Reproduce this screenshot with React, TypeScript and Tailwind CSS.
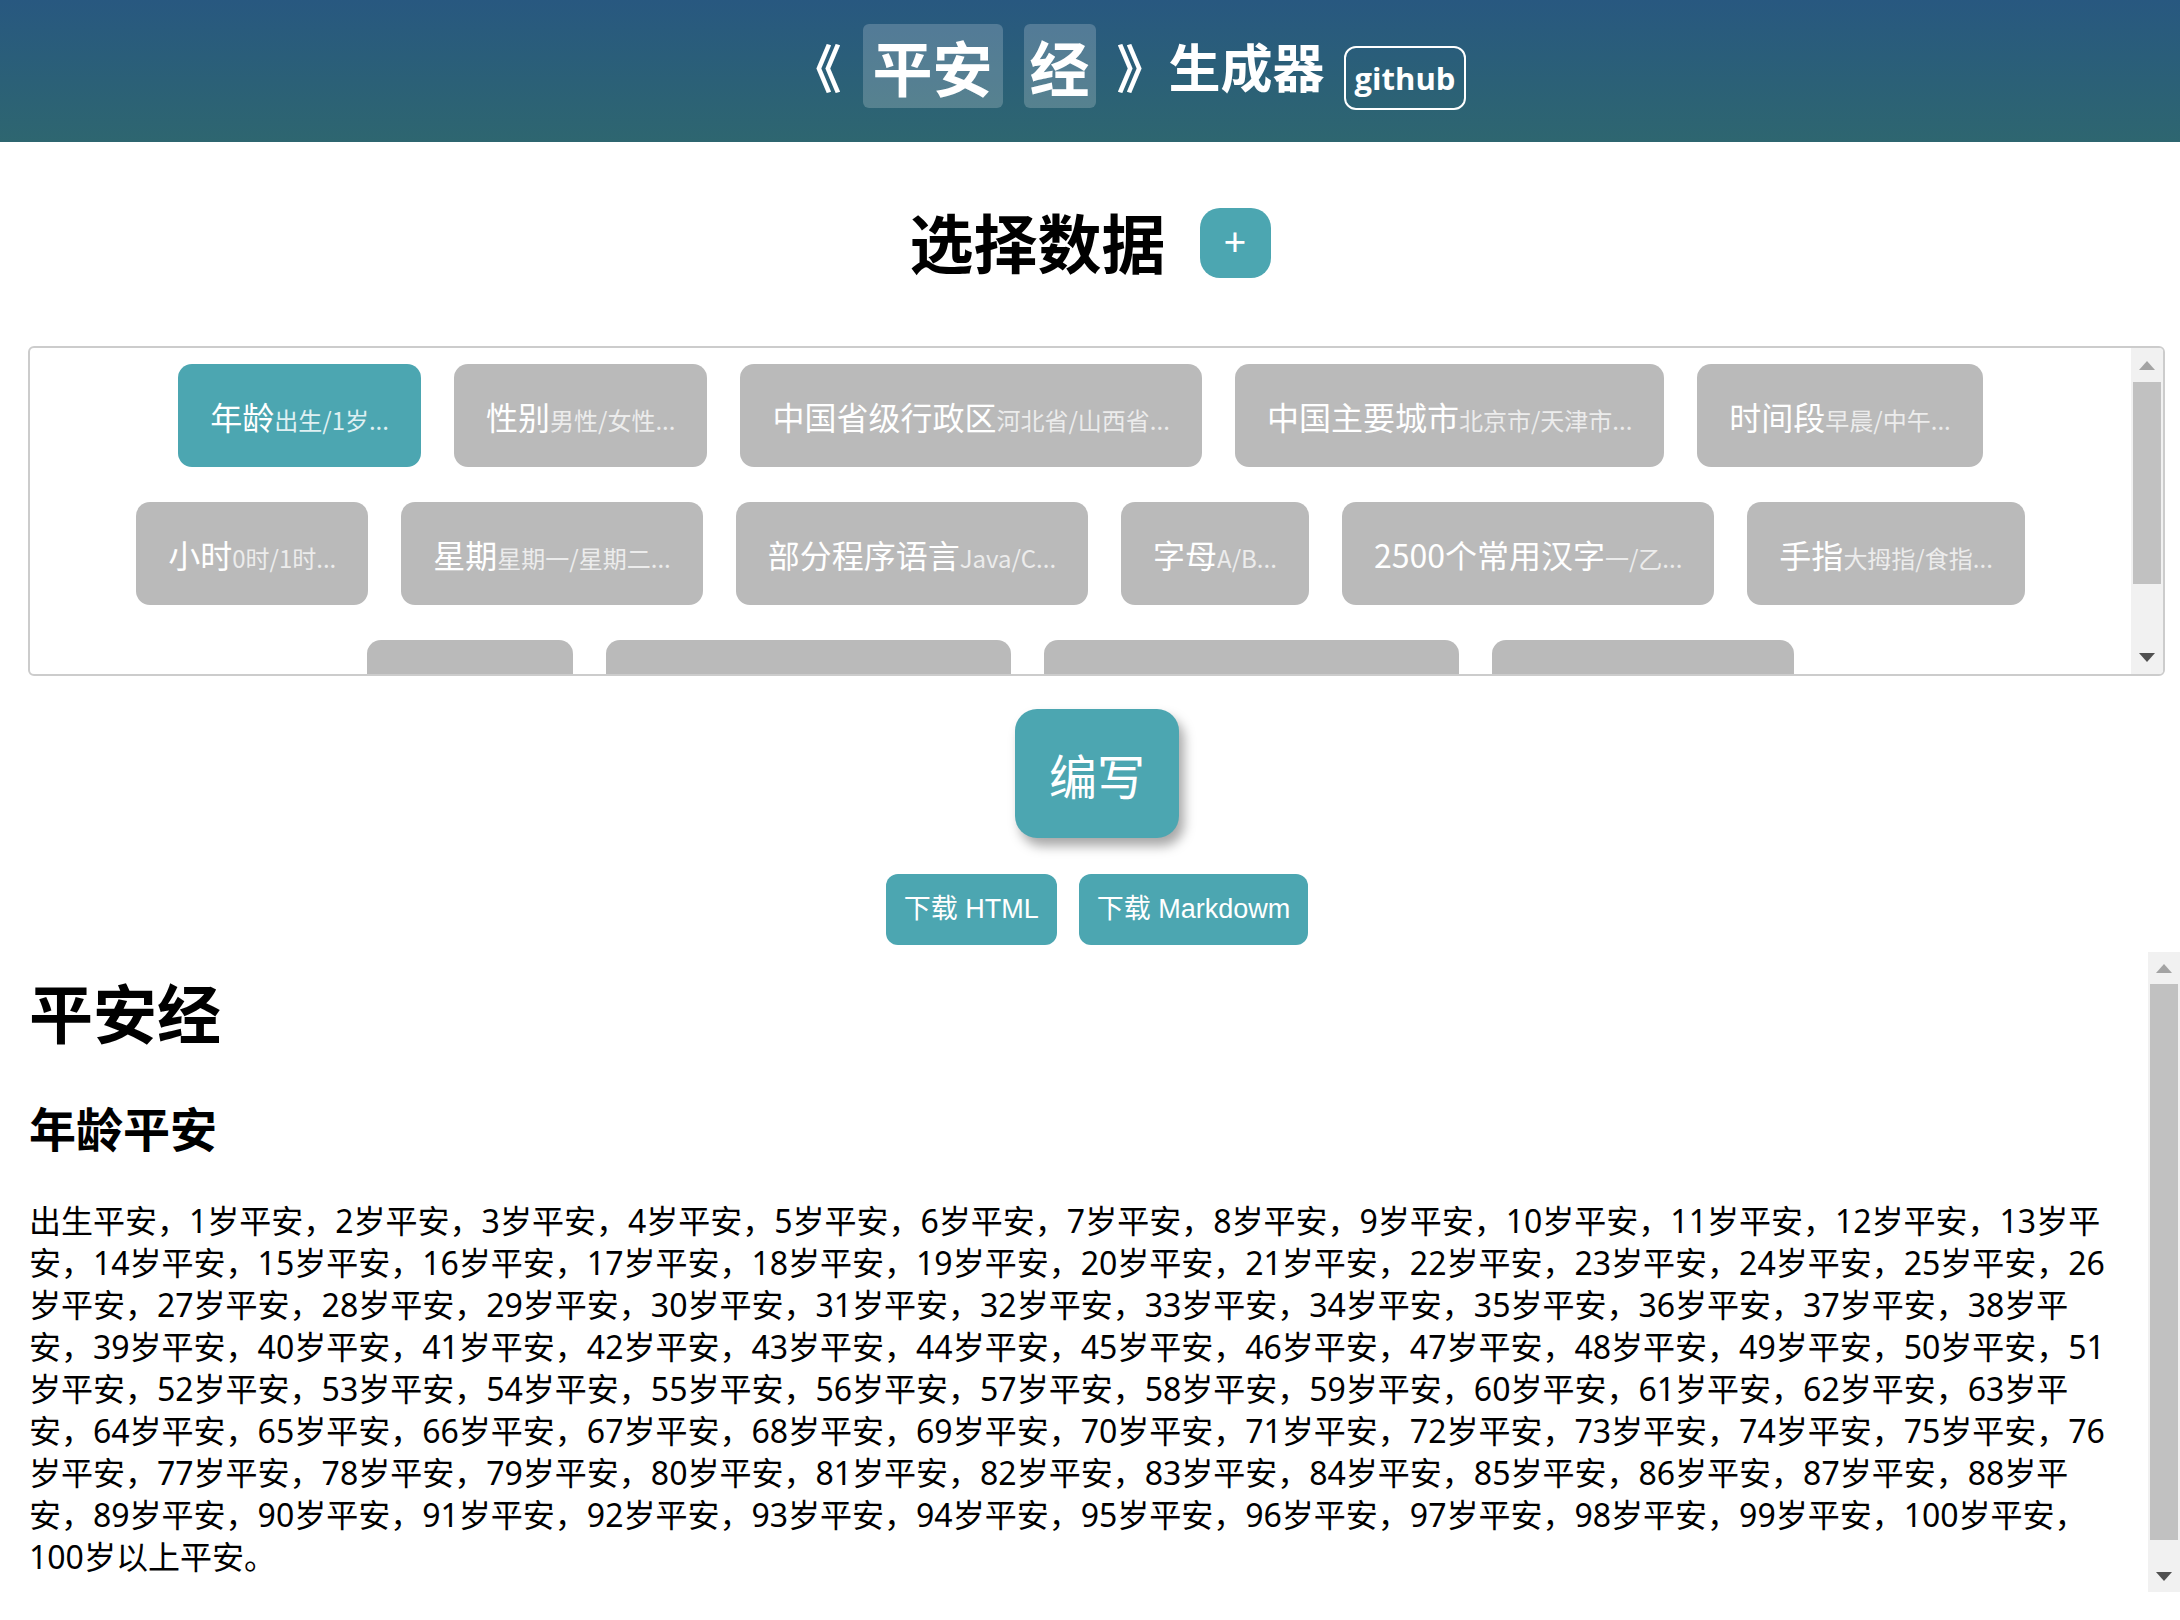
import React from 'react';

type Chip = { name: string; sample: string; active?: boolean };

const chipRows: Chip[][] = [
  [
    { name: '年龄', sample: '出生/1岁...', active: true },
    { name: '性别', sample: '男性/女性...' },
    { name: '中国省级行政区', sample: '河北省/山西省...' },
    { name: '中国主要城市', sample: '北京市/天津市...' },
    { name: '时间段', sample: '早晨/中午...' },
  ],
  [
    { name: '小时', sample: '0时/1时...' },
    { name: '星期', sample: '星期一/星期二...' },
    { name: '部分程序语言', sample: 'Java/C...' },
    { name: '字母', sample: 'A/B...' },
    { name: '2500个常用汉字', sample: '一/乙...' },
    { name: '手指', sample: '大拇指/食指...' },
  ],
  [
    { name: '生肖', sample: '鼠/牛...' },
    { name: '中国少数民族', sample: '蒙古族/回族...' },
    { name: '世界主要国家', sample: '中国/美国/日...' },
    { name: '星座', sample: '白羊座/金牛座...' },
  ],
];

// 年龄平安 paragraph, broken where the original wraps
const ages = ['出生', ...Array.from({ length: 100 }, (_, i) => `${i + 1}岁`), '100岁以上'];
const fullText = ages.map((a) => a + '平安').join('，') + '。';
const breakAfter = ['13岁平', '，26', '38岁平', '，51', '63岁平', '，76', '88岁平', '100岁平安，'];
const lines: string[] = [];
{
  let pos = 0;
  for (const m of breakAfter) {
    const end = fullText.indexOf(m, pos) + m.length;
    lines.push(fullText.slice(pos, end));
    pos = end;
  }
  lines.push(fullText.slice(pos));
}

const Arrow = ({ up, color }: { up?: boolean; color: string }) => (
  <svg width="16" height="9" viewBox="0 0 16 9">
    <path d={up ? 'M8 0 L16 9 L0 9 Z' : 'M0 0 L16 0 L8 9 Z'} fill={color} />
  </svg>
);

const Scrollbar = ({ arrowH, thumbH }: { arrowH: string; thumbH: string }) => (
  <div className="flex flex-col w-[32px] bg-[#f1f1f1] shrink-0">
    <div className={`${arrowH} flex items-center justify-center`}>
      <Arrow up color="#a3a3a3" />
    </div>
    <div className={`${thumbH} mx-[2px] bg-[#c1c1c1]`}></div>
    <div className="flex-1"></div>
    <div className={`${arrowH} flex items-center justify-center`}>
      <Arrow color="#505050" />
    </div>
  </div>
);

const App = () => {
  return (
    <div className="min-h-[1620px] bg-white font-['Noto_Sans','Noto_Sans_CJK_SC',sans-serif] text-black">
      {/* Header */}
      <header className="h-[142px] bg-gradient-to-b from-[#285880] to-[#2e6670] flex items-center justify-center pl-[76px] pb-[10px] text-white font-bold">
        <span className="text-[52px] leading-none w-[52px] font-['Noto_Sans_CJK_SC',sans-serif]">《</span>
        <span className="ml-[21px] px-[10px] h-[84px] flex items-center rounded-[6px] bg-white/20 text-[60px] leading-none font-['Noto_Sans_CJK_SC',sans-serif]">
          平安
        </span>
        <span className="ml-[21px] px-[6px] h-[84px] flex items-center rounded-[6px] bg-white/20 text-[60px] leading-none font-['Noto_Sans_CJK_SC',sans-serif]">
          经
        </span>
        <span className="ml-[21px] text-[52px] leading-none w-[52px] font-['Noto_Sans_CJK_SC',sans-serif]">》</span>
        <span className="text-[52px] leading-none font-['Noto_Sans_CJK_SC',sans-serif]">生成器</span>
        <a className="ml-[19px] mt-[24px] h-[64px] px-[9px] flex items-center border-2 border-white rounded-[12px] text-[31px] font-bold font-['Open_Sans',sans-serif]">
          github
        </a>
      </header>

      {/* 选择数据 */}
      <div className="mt-[66px] h-[70px] flex items-center justify-center gap-[34px]">
        <h2 className="mb-[6px] text-[64px] leading-none font-bold font-['Noto_Sans_CJK_SC',sans-serif]">选择数据</h2>
        <button className="w-[71px] h-[70px] rounded-[20px] bg-[#4ca6b1] text-white text-[40px] leading-none flex items-center justify-center pb-[4px]">
          +
        </button>
      </div>

      {/* data list */}
      <div className="mt-[68px] ml-[28px] mr-[15px] h-[330px] border-2 border-[#cccccc] rounded-[6px] flex overflow-hidden">
        <div className="flex-1 overflow-hidden pt-[16px] flex flex-col gap-[35px]">
          {chipRows.map((row, r) => (
            <div key={r} className="flex justify-center gap-[33px]">
              {row.map((chip) => (
                <div
                  key={chip.name}
                  className={`h-[103px] shrink-0 px-[32px] rounded-[14px] flex items-center whitespace-nowrap font-['Noto_Sans_CJK_SC',sans-serif] ${
                    chip.active ? 'bg-[#4ca6b1]' : 'bg-[#bababa]'
                  }`}
                >
                  <span className="leading-none">
                    <span className="text-[32px] text-white">{chip.name}</span>
                    <span className={`text-[24px] ${chip.active ? 'text-[#dff0f2]' : 'text-[#ececec]'}`}>
                      {chip.sample}
                    </span>
                  </span>
                </div>
              ))}
            </div>
          ))}
        </div>
        <Scrollbar arrowH="h-[34px]" thumbH="h-[202px]" />
      </div>

      {/* 编写 */}
      <div className="mt-[33px] flex justify-center pl-[14px]">
        <button className="w-[164px] h-[129px] rounded-[22px] bg-[#4ca6b1] text-white text-[48px] leading-none shadow-[5px_8px_12px_rgba(0,0,0,0.35)] font-['Noto_Sans_CJK_SC',sans-serif]">
          编写
        </button>
      </div>

      {/* downloads */}
      <div className="mt-[36px] flex justify-center gap-[22px] pl-[14px]">
        <button className="h-[71px] px-[18px] rounded-[12px] bg-[#4ca6b1] text-white text-[27px] font-['Liberation_Sans','Noto_Sans_CJK_SC',sans-serif]">
          下载 HTML
        </button>
        <button className="h-[71px] px-[18px] rounded-[12px] bg-[#4ca6b1] text-white text-[27px] font-['Liberation_Sans','Noto_Sans_CJK_SC',sans-serif]">
          下载 Markdowm
        </button>
      </div>

      {/* article */}
      <div className="mt-[7px] h-[640px] flex">
        <div className="flex-1 overflow-hidden pl-[29px] pr-[20px]">
          <h1 className="mt-[18px] text-[64px] leading-[80px] font-bold font-['Noto_Sans_CJK_SC',sans-serif]">平安经</h1>
          <h2 className="mt-[47px] text-[47px] leading-[60px] font-bold font-['Noto_Sans_CJK_SC',sans-serif]">年龄平安</h2>
          <div className="mt-[43px] text-[32px] leading-[42px]">
            {lines.map((line, i) => (
              <div key={i} className="whitespace-nowrap">
                {line}
              </div>
            ))}
          </div>
        </div>
        <Scrollbar arrowH="h-[32px]" thumbH="h-[556px]" />
      </div>
    </div>
  );
};

export default App;
